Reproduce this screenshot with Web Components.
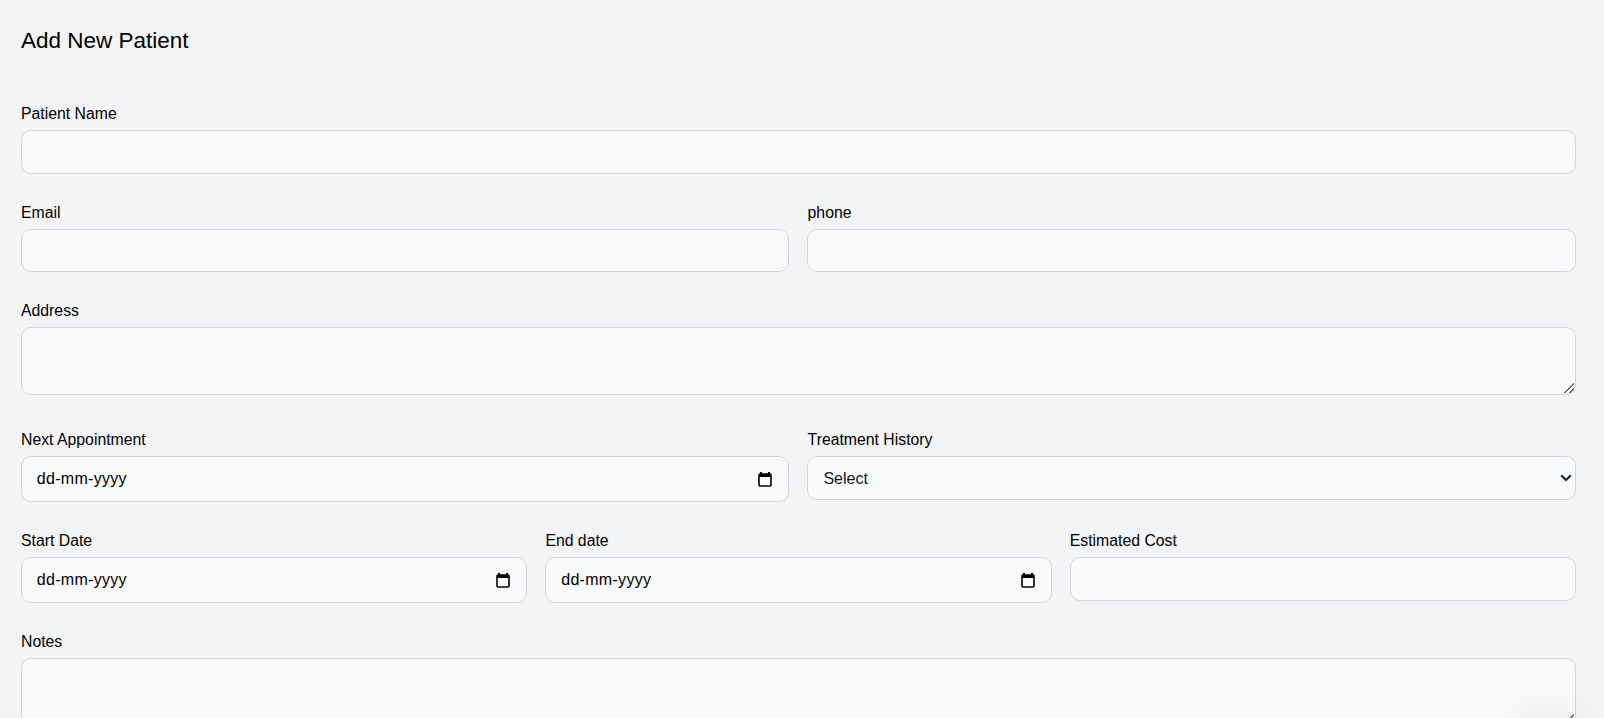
<!DOCTYPE html>
<html lang="en">
<head>
<meta charset="utf-8">
<title>Add New Patient</title>
<style>
  html, body { margin: 0; height: 718px; overflow: hidden; background: #f3f4f6; }
  body { font-family: "Liberation Sans", Arial, sans-serif; color: #000; }
</style>
</head>
<body>
<patient-page>
  <span slot="title">Add New Patient</span>
  <form-row cols="1"><form-field label="Patient Name" type="text"></form-field></form-row>
  <form-row cols="2">
    <form-field label="Email" type="text"></form-field>
    <form-field label="phone" type="text"></form-field>
  </form-row>
  <form-row cols="1"><form-field label="Address" type="area"></form-field></form-row>
  <form-row cols="2">
    <form-field label="Next Appointment" type="date"></form-field>
    <form-field label="Treatment History" type="select"></form-field>
  </form-row>
  <form-row cols="3">
    <form-field label="Start Date" type="date"></form-field>
    <form-field label="End date" type="date"></form-field>
    <form-field label="Estimated Cost" type="text"></form-field>
  </form-row>
  <form-row cols="1"><form-field label="Notes" type="area"></form-field></form-row>
</patient-page>
<corner-shade></corner-shade>

<script>
const pageTemplate = document.createElement("template");
pageTemplate.innerHTML = `
  <style>
    :host { display: block; padding: 27px 28px 0 20.8px; }
    h1 { margin: 0 0 47px; padding-left: .2px; font-size: 22.5px; line-height: 28px; font-weight: 400; }
    .rows { display: flex; flex-direction: column; }
    ::slotted(form-row) { margin-bottom: 27px; }
  </style>
  <h1><slot name="title"></slot></h1>
  <div class="rows"><slot></slot></div>
`;

class PatientPage extends HTMLElement {
  constructor() {
    super();
    this.attachShadow({ mode: "open" });
    this.shadowRoot.appendChild(pageTemplate.content.cloneNode(true));
  }
}

class FormRow extends HTMLElement {
  constructor() {
    super();
    const cols = this.getAttribute("cols") || 1;
    this.attachShadow({ mode: "open" }).innerHTML = `
      <style>
        :host { display: grid; grid-template-columns: repeat(${cols}, minmax(0, 1fr)); column-gap: 18px; }
      </style>
      <slot></slot>
    `;
  }
}

const calendarIcon = `
  <svg width="14" height="16" viewBox="0 0 14 16" aria-hidden="true">
    <path d="M3 1v2M11 1v2" stroke="#000" stroke-width="2" fill="none"/>
    <rect x="1" y="3" width="12" height="12" rx="1" fill="none" stroke="#000" stroke-width="1.6"/>
    <rect x="1" y="3" width="12" height="3" fill="#000"/>
  </svg>`;

const chevronIcon = `
  <svg class="chevron" width="12" height="8" viewBox="0 0 12 8" aria-hidden="true">
    <path d="M1.2 1.4 6 6 10.8 1.4" stroke="#1f2937" stroke-width="2.2" fill="none"/>
  </svg>`;

class FormField extends HTMLElement {
  constructor() {
    super();
    const label = this.getAttribute("label");
    const type = this.getAttribute("type");
    let control = `<input type="text">`;
    if (type === "area") {
      control = `<textarea></textarea>`;
    } else if (type === "select") {
      control = `<div class="pick"><select><option>Select</option></select>${chevronIcon}</div>`;
    } else if (type === "date") {
      control = `<div class="date"><span>dd-mm-yyyy</span>${calendarIcon}</div>`;
    }
    this.attachShadow({ mode: "open" }).innerHTML = `
      <style>
        :host { display: block; }
        label { display: block; margin-bottom: 4px; padding-left: .2px; font-size: 15.8px; line-height: 24px; }
        input, textarea, select, .date {
          display: block; width: 100%; box-sizing: border-box; margin: 0;
          border: 1px solid #d1d5db; border-radius: 10px; background: #f9fafb;
          font: 16px "Liberation Sans", Arial, sans-serif; color: #000; outline: none;
        }
        input, select { height: 43.5px; padding: 0 15px; }
        select { appearance: none; color: #111827; padding-top: 2px; }
        .pick { position: relative; }
        .chevron { position: absolute; right: 4px; top: 18px; }
        textarea { height: 68px; margin-bottom: 6px; padding: 8px 15px; resize: vertical; }
        textarea::-webkit-resizer {
          background: linear-gradient(135deg,
            transparent 51%, #666 51%, #666 60%, transparent 60%,
            transparent 73%, #666 73%, #666 82%, transparent 82%) no-repeat right 1px bottom 1px / 11px 11px;
        }
        .date {
          height: 46px; padding: 0 16px 0 15px; display: flex; align-items: center;
          justify-content: space-between; letter-spacing: .3px;
        }
      </style>
      <label>${label}</label>
      ${control}
    `;
  }
}

// faint shadow that sits over the bottom right corner
class CornerShade extends HTMLElement {
  constructor() {
    super();
    this.attachShadow({ mode: "open" }).innerHTML = `
      <style>
        :host {
          position: fixed; right: 8px; bottom: 0; width: 110px; height: 40px; pointer-events: none;
          background: radial-gradient(ellipse 55px 32px at 55% 100%, rgba(0,0,0,.035), rgba(0,0,0,0));
        }
      </style>
    `;
  }
}

customElements.define("patient-page", PatientPage);
customElements.define("form-row", FormRow);
customElements.define("form-field", FormField);
customElements.define("corner-shade", CornerShade);
</script>
</body>
</html>
